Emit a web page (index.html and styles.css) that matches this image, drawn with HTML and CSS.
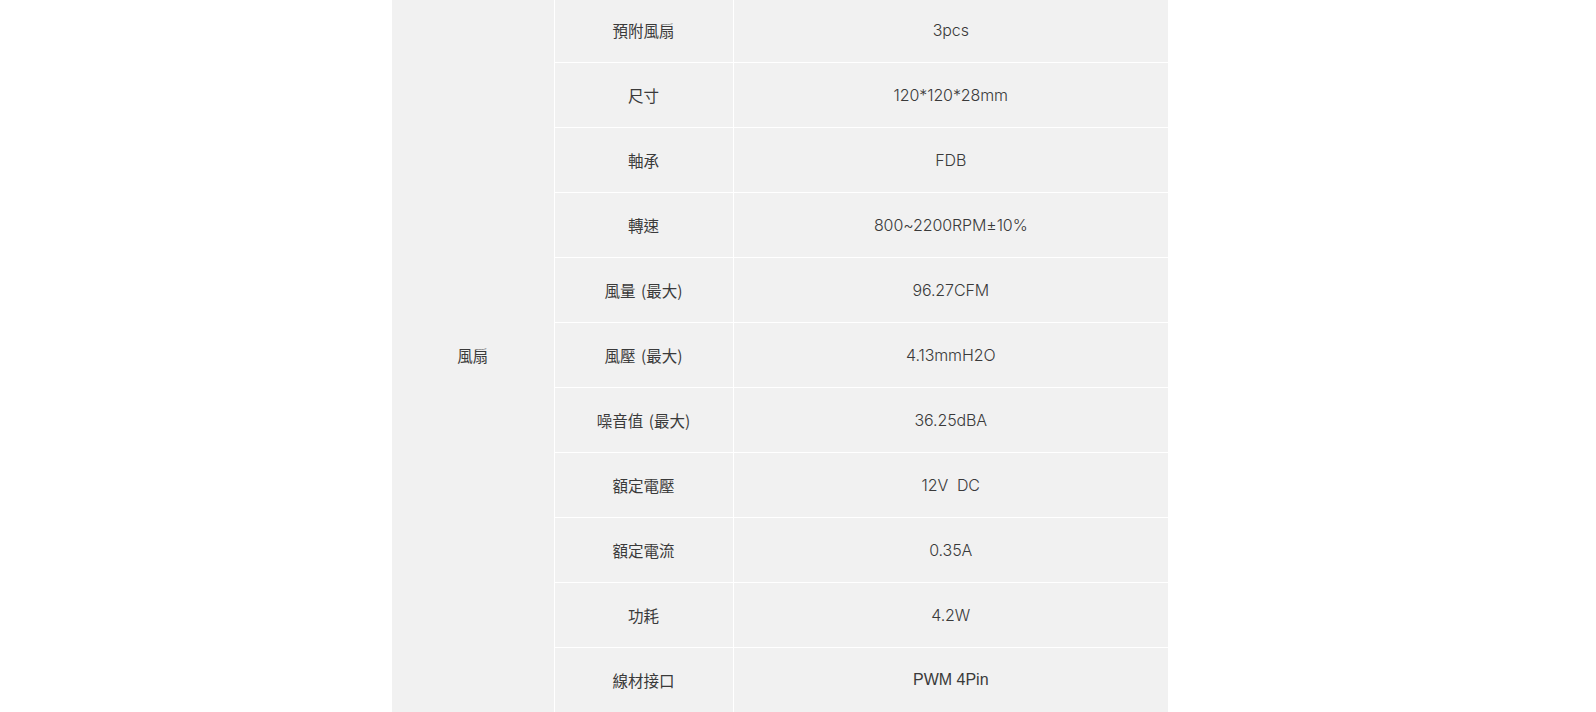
FILE: index.html
```html
<!DOCTYPE html>
<html lang="zh-Hant">
<head>
<meta charset="utf-8">
<title>規格</title>
<link rel="stylesheet" href="styles.css">
</head>
<body>
<div class="page">
  <table class="spec">
    <colgroup>
      <col class="c1"><col class="c2"><col class="c3">
    </colgroup>
    <tbody>
      <tr><td class="group" rowspan="11">風扇</td><td class="key">預附風扇</td><td class="val">3pcs</td></tr>
      <tr><td class="key">尺寸</td><td class="val">120*120*28mm</td></tr>
      <tr><td class="key">軸承</td><td class="val">FDB</td></tr>
      <tr><td class="key">轉速</td><td class="val">800~2200RPM±10%</td></tr>
      <tr><td class="key">風量 (最大)</td><td class="val">96.27CFM</td></tr>
      <tr><td class="key">風壓 (最大)</td><td class="val">4.13mmH2O</td></tr>
      <tr><td class="key">噪音值 (最大)</td><td class="val">36.25dBA</td></tr>
      <tr><td class="key">額定電壓</td><td class="val">12V&nbsp; DC</td></tr>
      <tr><td class="key">額定電流</td><td class="val">0.35A</td></tr>
      <tr><td class="key">功耗</td><td class="val">4.2W</td></tr>
      <tr><td class="key">線材接口</td><td class="val plain">PWM 4Pin</td></tr>
    </tbody>
  </table>
</div>
</body>
</html>
```
FILE: styles.css
```css
html, body {
  margin: 0;
  padding: 0;
  background: #ffffff;
  overflow: hidden;
}
.page {
  display: flex;
  justify-content: flex-start;
  padding-left: 392px;
  margin-top: -2px;
}
.spec {
  border-collapse: collapse;
  table-layout: fixed;
  width: 776px;
  background: #f1f1f1;
  color: #3a3a3a;
  font-family: Inter, "Noto Sans CJK TC", sans-serif;
  font-size: 16px;
}
.spec col.c1 { width: 162px; }
.spec col.c2 { width: 179px; }
.spec col.c3 { width: 435px; }
.spec td {
  height: 64px;
  padding: 0;
  text-align: center;
  vertical-align: middle;
  border: 1px solid #ffffff;
  line-height: 20px;
}
.spec td > span {
  display: inline-block;
  position: relative;
  top: -1px;
}
.spec tr:first-child td { border-top: none; }
.spec tr:last-child td { border-bottom: none; }
.spec td.group { border-left: none; }
.spec td.val { border-right: none; }
.spec td.key {
  font-family: "Noto Sans CJK TC", sans-serif;
  font-size: 15.5px;
  word-spacing: 2px;
}
.spec td.val {
  font-size: 16px;
  font-weight: 350;
  letter-spacing: -0.1px;
  line-height: 18px;
}
.spec td.val.plain {
  font-family: "Liberation Sans", Arial, sans-serif;
  font-weight: 400;
  letter-spacing: 0;
}
.spec td.group {
  font-family: "Noto Sans CJK TC", sans-serif;
  font-size: 15.5px;
}
```
